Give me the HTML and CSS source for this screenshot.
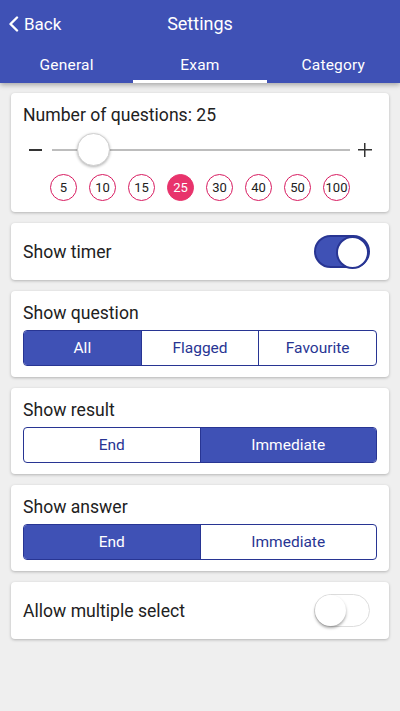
FILE: index.html
```html
<!DOCTYPE html>
<html>
<head>
  <meta charset="UTF-8">
  <meta name="viewport" content="width=device-width, initial-scale=1">
  <link rel="stylesheet" href="styles.css">
</head>
<body>
  <div class="header">
    <div class="topbar">
      <div class="back">
        <svg width="12" height="16" viewBox="0 0 12 16"><path d="M9 1.5 L2.5 8 L9 14.5" fill="none" stroke="#fff" stroke-width="2.4" stroke-linecap="round" stroke-linejoin="round"/></svg>
        <span>Back</span>
      </div>
      <div class="title">Settings</div>
    </div>
    <div class="tabs">
      <div class="tab">General</div>
      <div class="tab active">Exam</div>
      <div class="tab">Category</div>
    </div>
  </div>

  <div class="content">
    <div class="card numcard">
      <div class="label">Number of questions: 25</div>
      <div class="slider">
        <span class="minus"></span>
        <div class="track"><span class="thumb"></span></div>
        <span class="plus"></span>
      </div>
      <div class="chips">
        <span class="chip">5</span>
        <span class="chip">10</span>
        <span class="chip">15</span>
        <span class="chip on">25</span>
        <span class="chip">30</span>
        <span class="chip">40</span>
        <span class="chip">50</span>
        <span class="chip">100</span>
      </div>
    </div>

    <div class="card row">
      <div class="label">Show timer</div>
      <div class="toggle on"><span class="knob"></span></div>
    </div>

    <div class="card seg-card">
      <div class="label">Show question</div>
      <div class="segs">
        <div class="seg on">All</div>
        <div class="seg">Flagged</div>
        <div class="seg">Favourite</div>
      </div>
    </div>

    <div class="card seg-card">
      <div class="label">Show result</div>
      <div class="segs">
        <div class="seg">End</div>
        <div class="seg on">Immediate</div>
      </div>
    </div>

    <div class="card seg-card">
      <div class="label">Show answer</div>
      <div class="segs">
        <div class="seg on">End</div>
        <div class="seg">Immediate</div>
      </div>
    </div>

    <div class="card row">
      <div class="label">Allow multiple select</div>
      <div class="toggle"><span class="knob"></span></div>
    </div>
  </div>
</body>
</html>
```

FILE: styles.css
```css
body {
  margin: 0;
  background: #efefef;
  font-family: Roboto, "Noto Sans", sans-serif;
  color: #212121;
}
.header {
  background: #3f51b5;
  color: #fff;
  height: 83px;
  box-shadow: 0 2px 5px rgba(0,0,0,0.3);
}
.topbar {
  height: 46px;
  display: flex;
  align-items: center;
  justify-content: center;
  position: relative;
}
.back {
  position: absolute;
  left: 8px;
  top: 14px;
  display: flex;
  align-items: center;
  gap: 4px;
  font-size: 17px;
}
.title {
  font-size: 18px;
}
.tabs {
  display: flex;
  height: 37px;
}
.tab {
  flex: 1;
  text-align: center;
  font-size: 15.5px;
  line-height: 36px;
  padding-top: 1px;
  box-sizing: border-box;
  letter-spacing: 0.2px;
}
.tab.active {
  border-bottom: 3px solid #fff;
}
.content {
  padding: 10px 11px;
  display: flex;
  flex-direction: column;
  gap: 11px;
}
.card {
  background: #fff;
  border-radius: 4px;
  box-shadow: 0 1px 3px rgba(0,0,0,0.25);
  padding: 0 12px;
}
.label {
  font-size: 17.6px;
  line-height: 24px;
}
.numcard {
  padding: 10px 12px 11px;
}
.slider {
  display: flex;
  align-items: center;
  height: 32px;
  margin-top: 7px;
}
.minus {
  width: 13px;
  height: 1.5px;
  background: #333;
  margin: 0 10px 0 6px;
}
.plus {
  width: 14px;
  height: 14px;
  margin: 0 5px 0 8px;
  background: linear-gradient(#333, #333) center / 100% 1.5px no-repeat,
              linear-gradient(#333, #333) center / 1.5px 100% no-repeat;
}
.track {
  flex: 1;
  height: 2px;
  background: #bdbdbd;
  position: relative;
}
.thumb {
  position: absolute;
  left: 25px;
  top: -16px;
  width: 31px;
  height: 31px;
  border-radius: 50%;
  background: #fff;
  border: 1px solid #d0d0d0;
  box-shadow: 0 1px 3px rgba(0,0,0,0.3);
}
.chips {
  display: flex;
  justify-content: center;
  gap: 12px;
  margin-top: 8px;
}
.chip {
  width: 27px;
  height: 27px;
  box-sizing: border-box;
  border: 1.5px solid #d81b60;
  border-radius: 50%;
  display: flex;
  align-items: center;
  justify-content: center;
  font-size: 13px;
}
.chip.on {
  background: #e8336c;
  border-color: #e8336c;
  color: #fff;
}
.row {
  height: 57px;
  display: flex;
  align-items: center;
  justify-content: space-between;
}
.toggle {
  width: 56px;
  height: 33px;
  box-sizing: border-box;
  border-radius: 17px;
  border: 1px solid #ddd;
  background: #fff;
  position: relative;
  margin-right: 7px;
}
.toggle .knob {
  position: absolute;
  left: 0;
  top: 0;
  width: 31px;
  height: 31px;
  border-radius: 50%;
  background: #fff;
  box-shadow: 0 2px 3px rgba(0,0,0,0.35);
}
.toggle.on {
  background: #3f51b5;
  border: 2px solid #283593;
}
.toggle.on .knob {
  left: auto;
  right: -1px;
  top: -1px;
  width: 29px;
  height: 29px;
  border: 2px solid #283593;
  box-shadow: none;
}
.seg-card {
  padding: 10px 12px 11px;
}
.segs {
  display: flex;
  margin-top: 5px;
  height: 36px;
  box-sizing: border-box;
  border: 1px solid #283593;
  border-radius: 4px;
  overflow: hidden;
}
.seg {
  flex: 1;
  display: flex;
  align-items: center;
  justify-content: center;
  font-size: 15.5px;
  color: #283593;
  border-left: 1px solid #283593;
}
.seg:first-child {
  border-left: none;
}
.seg.on {
  background: #3f51b5;
  color: #fff;
}
```
